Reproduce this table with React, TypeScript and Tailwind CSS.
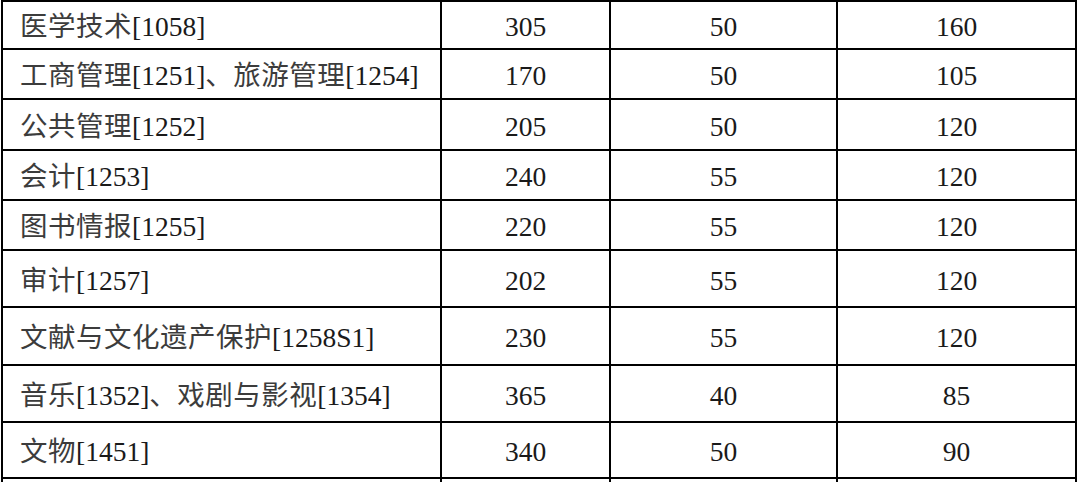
import React from "react";

const rows: { name: string; a: string; b: string; c: string; h: string }[] = [
  { name: "医学技术[1058]", a: "305", b: "50", c: "160", h: "h-[48px]" },
  { name: "工商管理[1251]、旅游管理[1254]", a: "170", b: "50", c: "105", h: "h-[50px]" },
  { name: "公共管理[1252]", a: "205", b: "50", c: "120", h: "h-[51px]" },
  { name: "会计[1253]", a: "240", b: "55", c: "120", h: "h-[50px]" },
  { name: "图书情报[1255]", a: "220", b: "55", c: "120", h: "h-[50px]" },
  { name: "审计[1257]", a: "202", b: "55", c: "120", h: "h-[57px]" },
  { name: "文献与文化遗产保护[1258S1]", a: "230", b: "55", c: "120", h: "h-[58px]" },
  { name: "音乐[1352]、戏剧与影视[1354]", a: "365", b: "40", c: "85", h: "h-[57px]" },
  { name: "文物[1451]", a: "340", b: "50", c: "90", h: "h-[56px]" },
];

function Name({ text }: { text: string }) {
  const parts = text.split(/(\[[^\]]*\])/).filter((p) => p.length > 0);
  return (
    <>
      {parts.map((p, i) =>
        p.startsWith("[") ? (
          <span key={i}>{p}</span>
        ) : (
          <span key={i} className="text-[#3c3c3c] tracking-[0.5px]">
            {p}
          </span>
        )
      )}
    </>
  );
}

export default function App() {
  return (
    <div className="w-[1080px] h-[482px] overflow-hidden bg-white">
      <table
        className="ml-[1px] table-fixed border-collapse text-[27.5px] leading-none text-[#1a1a1a]"
        style={{ fontFamily: '"Liberation Serif", "Noto Sans CJK SC", serif' }}
      >
        <colgroup>
          <col className="w-[439px]" />
          <col className="w-[169px]" />
          <col className="w-[227px]" />
          <col className="w-[239px]" />
        </colgroup>
        <tbody>
          {rows.map((r) => (
            <tr key={r.name} className={r.h}>
              <td className="border-2 border-black p-0 pl-[17px] pt-[4px] text-left align-middle whitespace-nowrap">
                <Name text={r.name} />
              </td>
              <td className="border-2 border-black p-0 pt-[4px] text-center align-middle">{r.a}</td>
              <td className="border-2 border-black p-0 pt-[4px] text-center align-middle">{r.b}</td>
              <td className="border-2 border-black p-0 pt-[4px] text-center align-middle">{r.c}</td>
            </tr>
          ))}
          <tr className="h-[50px]">
            <td className="border-2 border-black p-0" />
            <td className="border-2 border-black p-0" />
            <td className="border-2 border-black p-0" />
            <td className="border-2 border-black p-0" />
          </tr>
        </tbody>
      </table>
    </div>
  );
}
